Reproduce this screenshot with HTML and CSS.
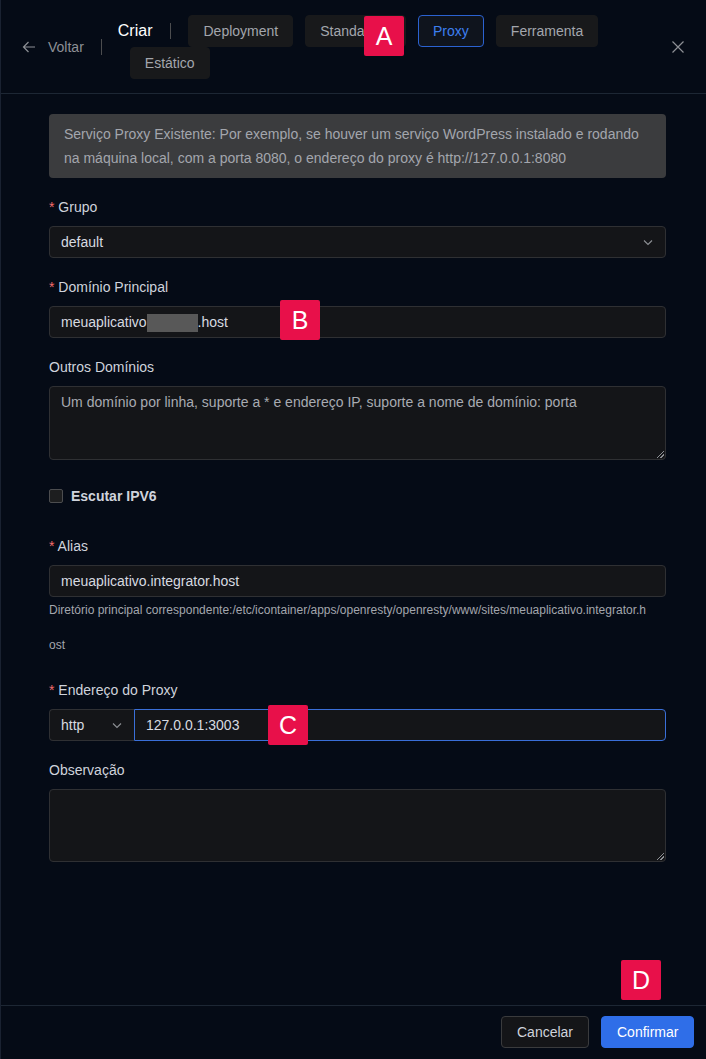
FILE: index.html
```html
<!DOCTYPE html>
<html lang="pt">
<head>
<meta charset="utf-8">
<title>Criar Proxy</title>
<link rel="stylesheet" href="styles.css">
</head>
<body>
<div class="drawer">
  <header class="header">
    <div class="back">
      <svg class="back-arrow" viewBox="0 0 14 14" width="14" height="14"><path d="M13 7H1.5M6.5 2 1.5 7l5 5" fill="none" stroke="currentColor" stroke-width="1.2"/></svg>
      <span>Voltar</span>
    </div>
    <span class="vdiv back-div"></span>
    <div class="title-wrap">
      <span class="title">Criar</span>
      <span class="vdiv title-div"></span>
      <button class="tab">Deployment</button>
      <button class="tab">Standalone</button>
      <button class="tab active">Proxy</button>
      <button class="tab">Ferramenta</button>
      <button class="tab">Estático</button>
    </div>
    <svg class="close" viewBox="0 0 14 14" width="14" height="14"><path d="M1.5 1.5l11 11M12.5 1.5l-11 11" fill="none" stroke="currentColor" stroke-width="1.2"/></svg>
  </header>

  <main class="content">
    <div class="alert">Serviço Proxy Existente: Por exemplo, se houver um serviço WordPress instalado e rodando na máquina local, com a porta 8080, o endereço do proxy é http://127.0.0.1:8080</div>

    <div class="item">
      <div class="label"><span class="req">*</span> Grupo</div>
      <div class="field select">
        <span>default</span>
        <svg class="chev" viewBox="0 0 12 12" width="12" height="12"><path d="M2 4.5l4 4 4-4" fill="none" stroke="currentColor" stroke-width="1.1"/></svg>
      </div>
    </div>

    <div class="item">
      <div class="label"><span class="req">*</span> Domínio Principal</div>
      <div class="field"><span>meuaplicativo</span><span class="redact"></span><span>.host</span></div>
    </div>

    <div class="item">
      <div class="label">Outros Domínios</div>
      <div class="field textarea placeholder">Um domínio por linha, suporte a * e endereço IP, suporte a nome de domínio: porta<span class="grip"></span></div>
    </div>

    <div class="item check-row">
      <span class="checkbox"></span>
      <span class="check-label">Escutar IPV6</span>
    </div>

    <div class="item alias-item">
      <div class="label"><span class="req">*</span> Alias</div>
      <div class="field">meuaplicativo.integrator.host</div>
      <div class="help">
        <div class="help-line">Diretório principal correspondente:/etc/icontainer/apps/openresty/openresty/www/sites/meuaplicativo.integrator.h</div>
        <div class="help-line second">ost</div>
      </div>
    </div>

    <div class="item">
      <div class="label"><span class="req">*</span> Endereço do Proxy</div>
      <div class="group">
        <div class="field proto">
          <span>http</span>
          <svg class="chev" viewBox="0 0 12 12" width="12" height="12"><path d="M2 4.5l4 4 4-4" fill="none" stroke="currentColor" stroke-width="1.1"/></svg>
        </div>
        <div class="field addr">127.0.0.1:3003</div>
      </div>
    </div>

    <div class="item">
      <div class="label">Observação</div>
      <div class="field textarea obs"><span class="grip"></span></div>
    </div>
  </main>

  <footer class="footer">
    <button class="btn cancel">Cancelar</button>
    <button class="btn confirm">Confirmar</button>
  </footer>

  <span class="badge badge-a">A</span>
  <span class="badge badge-b">B</span>
  <span class="badge badge-c">C</span>
  <span class="badge badge-d">D</span>
</div>
</body>
</html>
```

FILE: styles.css
```css
* { box-sizing: border-box; }
html, body { margin: 0; padding: 0; }
body {
  background: #050b16;
  font-family: "Liberation Sans", Arial, sans-serif;
  font-size: 14px;
  color: #cfd3dc;
}
.drawer {
  position: relative;
  height: 1059px;
  display: flex;
  flex-direction: column;
  border-left: 1px solid #1a2231;
}
.header {
  height: 94px;
  flex: none;
  display: flex;
  align-items: center;
  padding: 0 21px 0 21px;
  border-bottom: 1px solid #1d2734;
}
.back {
  display: flex;
  align-items: center;
  color: #8d9095;
  font-size: 14px;
}
.back-arrow { margin-right: 12px; }
.vdiv {
  display: inline-block;
  width: 1px;
  height: 16px;
  background: #4c4d4f;
  flex: none;
}
.back-div { margin: 0 16px 0 17px; }
.title-wrap {
  flex: 1;
  display: flex;
  flex-wrap: wrap;
  align-items: center;
  align-self: center;
  margin-top: 0;
}
.title {
  font-size: 16px;
  color: #ffffff;
  line-height: 32px;
}
.title-div { margin: 0 5px 0 18px; }
.tab {
  height: 32px;
  padding: 0 14px;
  margin-left: 12px;
  font-family: inherit;
  font-size: 14px;
  color: #a3a6ad;
  background: #18191b;
  border: 1px solid #18191b;
  border-radius: 4px;
}
.tab.active {
  color: #3d7ff0;
  background: #0f141d;
  border-color: #2b62d1;
}
.close { color: #8d9095; flex: none; }

.content {
  flex: 1;
  padding: 20px 40px 0 48px;
}
.alert {
  background: #3b3c3e;
  color: #a3a6ad;
  border-radius: 4px;
  padding: 8px 15px;
  line-height: 24px;
  font-size: 14px;
  margin-bottom: 18px;
}
.item { margin-bottom: 18px; }
.label {
  line-height: 22px;
  margin-bottom: 8px;
  color: #cfd3dc;
}
.req { color: #f56c6c; }
.field {
  height: 32px;
  display: flex;
  align-items: center;
  padding: 0 11px;
  background: #141518;
  border: 1px solid #2f3033;
  border-radius: 4px;
  color: #d7dae0;
}
.select { justify-content: space-between; }
.chev { color: #8d9095; }
.redact {
  display: inline-block;
  width: 51px;
  height: 18px;
  background: #585858;
  margin-top: 2px;
}
.textarea {
  position: relative;
  height: 74px;
  align-items: flex-start;
  padding: 5px 11px;
  line-height: 21px;
}
.placeholder { color: #a8abb2; }
.obs { height: 73px; }
.grip {
  position: absolute;
  right: 1px;
  bottom: 1px;
  width: 7px;
  height: 7px;
  background: linear-gradient(135deg, transparent 45%, #8d9095 45%, #8d9095 55%, transparent 55%, transparent 70%, #8d9095 70%, #8d9095 80%, transparent 80%);
}
.check-row {
  display: flex;
  align-items: center;
  height: 36px;
  margin-bottom: 21px;
}
.checkbox {
  width: 14px;
  height: 14px;
  border: 1px solid #4c4d4f;
  background: #1d1e1f;
  border-radius: 2px;
  margin-right: 8px;
}
.check-label { font-weight: bold; color: #cfd3dc; }
.alias-item { margin-bottom: 25px; }
.help {
  font-size: 12px;
  color: #a3a6ad;
  padding-top: 4px;
}
.help-line { line-height: 18px; white-space: nowrap; }
.help-line.second { margin-top: 17px; }
.group { display: flex; }
.proto {
  width: 85px;
  flex: none;
  justify-content: space-between;
  border-radius: 4px 0 0 4px;
  border-right: none;
}
.addr {
  flex: 1;
  border-color: #3a6fd8;
  border-radius: 0 4px 4px 0;
}

.footer {
  flex: none;
  height: 54px;
  border-top: 1px solid #1d2734;
  display: flex;
  justify-content: flex-end;
  align-items: flex-start;
  padding: 10px 12px 0 0;
  gap: 12px;
}
.btn {
  height: 32px;
  padding: 0 15px;
  font-family: inherit;
  font-size: 14px;
  border-radius: 4px;
}
.cancel {
  background: #141518;
  border: 1px solid #3a3b3d;
  color: #cfd3dc;
  width: 88px;
}
.confirm {
  background: #2f6ee8;
  border: 1px solid #2f6ee8;
  color: #ffffff;
  width: 93px;
}

.badge {
  position: absolute;
  width: 40px;
  height: 40px;
  background: #e8104a;
  color: #ffffff;
  font-size: 25px;
  line-height: 40px;
  text-align: center;
  border-radius: 2px;
}
.badge-a { left: 363px; top: 16px; }
.badge-b { left: 279px; top: 300px; }
.badge-c { left: 267px; top: 705px; }
.badge-d { left: 620px; top: 960px; }
```
